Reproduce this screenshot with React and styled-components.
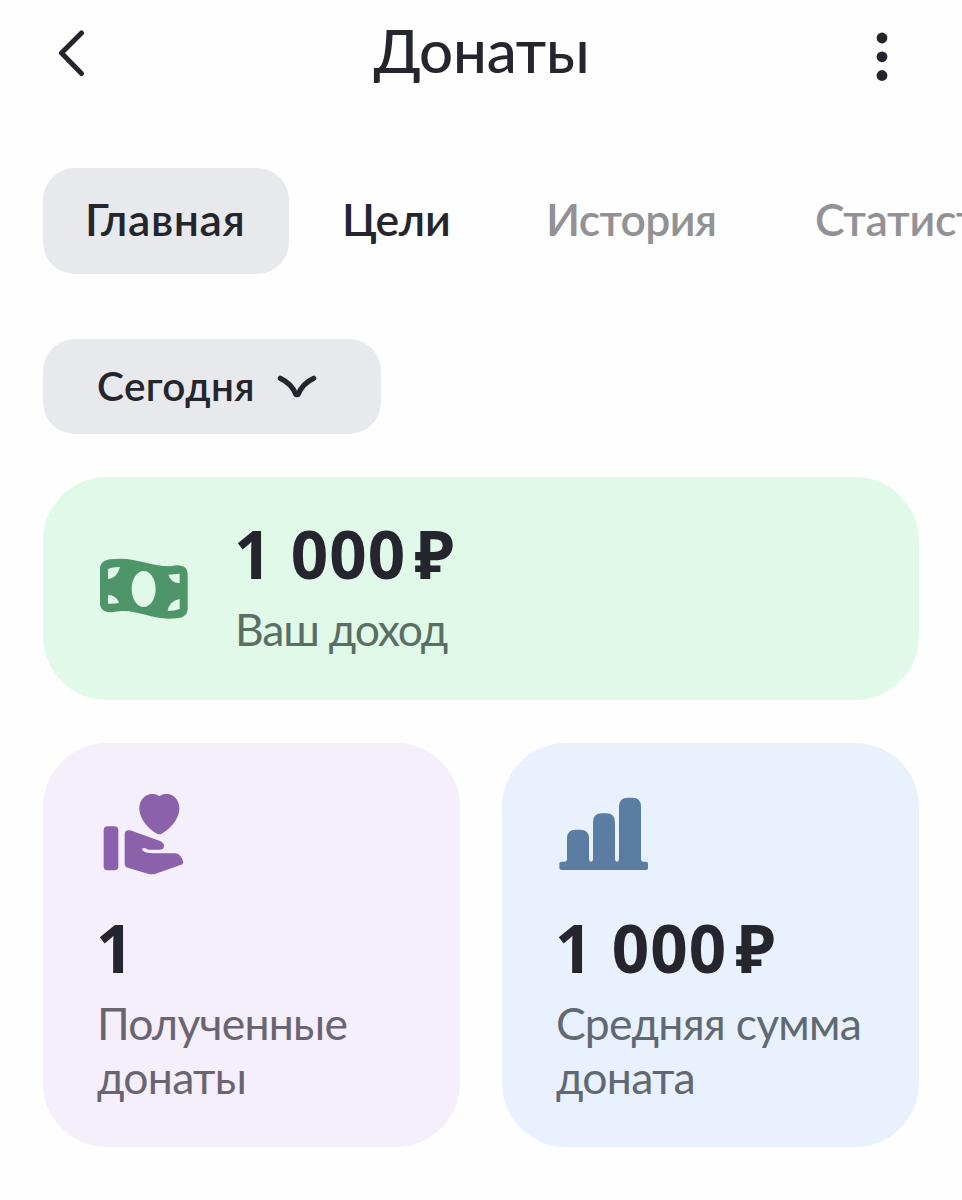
import React from 'react';
import styled, { createGlobalStyle } from 'styled-components';

const palette = {
  text: '#24252d',
  textMuted: '#929296',
  gray: '#e8e9ed',
  green: '#e1f9e9',
  greenIcon: '#4e9569',
  greenText: '#5b6e64',
  purple: '#f5eefb',
  purpleIcon: '#8b61ab',
  purpleText: '#6a6470',
  blue: '#e9f1fc',
  blueIcon: '#5b7ca3',
  blueText: '#606973',
};

const GlobalStyle = createGlobalStyle`
  * {
    box-sizing: border-box;
  }
  body {
    margin: 0;
    background: #fefefe;
    color: ${palette.text};
    font-family: Lato, 'Noto Sans', sans-serif;
  }
  button {
    padding: 0;
    border: 0;
    background: none;
    color: inherit;
    font-family: inherit;
    cursor: pointer;
  }
  svg {
    display: block;
  }
`;

const Page = styled.div`
  width: 100%;
  min-height: 1200px;
  overflow: hidden;
`;

const Header = styled.header`
  display: grid;
  grid-template-columns: 86px 1fr 86px;
  align-items: start;
  height: 168px;
  padding: 14px 37px 0 43px;
`;

const Title = styled.h1`
  margin: 0;
  padding-right: 5px;
  font-size: 60px;
  font-weight: 500;
  line-height: 72px;
  letter-spacing: -0.2px;
  text-align: center;
`;

const IconButton = styled.button`
  display: flex;
  justify-content: ${props => props.$align};
  padding: ${props => props.$pad};
`;

const Tabs = styled.nav`
  display: flex;
  height: 106px;
  padding-left: 43px;
`;

const Tab = styled.button`
  flex: 0 0 auto;
  width: ${props => props.$width}px;
  height: 106px;
  padding: 0 0 6px ${props => props.$indent}px;
  border-radius: 32px;
  background: ${props => (props.$active ? palette.gray : 'transparent')};
  color: ${props => (props.$muted ? palette.textMuted : palette.text)};
  font-size: 44.5px;
  font-weight: 600;
  letter-spacing: ${props => props.$spacing}px;
  text-align: left;
  white-space: nowrap;
`;

const Main = styled.main`
  display: flex;
  flex-direction: column;
  align-items: flex-start;
  padding: 65px 43px 0;
`;

const Period = styled.button`
  display: flex;
  align-items: center;
  gap: 22px;
  width: 338px;
  height: 95px;
  margin-bottom: 43px;
  padding: 0 0 0 54px;
  border-radius: 32px;
  background: ${palette.gray};
  font-size: 40.5px;
  font-weight: 600;
  letter-spacing: 0.4px;
  span {
    padding-bottom: 2px;
  }
`;

const Card = styled.section`
  border-radius: 64px;
  background: ${props => palette[props.$tone]};
  svg {
    fill: ${props => palette[`${props.$tone}Icon`]};
  }
  p {
    color: ${props => palette[`${props.$tone}Text`]};
  }
`;

const IncomeCard = styled(Card)`
  display: flex;
  align-items: center;
  gap: 46px;
  width: 876px;
  height: 223px;
  padding-left: 57px;
`;

const Income = styled.div`
  padding-bottom: 3px;
`;

const CardGrid = styled.div`
  display: grid;
  grid-template-columns: 417px 417px;
  gap: 42px;
  margin-top: 43px;
`;

const StatCard = styled(Card)`
  height: 404px;
  padding: 50px 0 0 53px;
`;

const IconBox = styled.div`
  height: 119px;
  padding: ${props => props.$pad};
`;

const Amount = styled.div`
  display: flex;
  font-family: 'Noto Sans', sans-serif;
  font-size: 65.5px;
  font-weight: 700;
  line-height: 72px;
  letter-spacing: 1.1px;
  white-space: pre;
`;

const Currency = styled.span`
  margin-left: 8px;
`;

const Label = styled.p`
  margin: 12px 0 0;
  padding-left: 1px;
  font-size: 44.5px;
  line-height: 53.5px;
  letter-spacing: ${props => props.$spacing || -0.75}px;
`;

const BackIcon = () => (
  <svg width="28" height="48" viewBox="0 0 28 48" fill="none">
    <path
      d="M24.5 4 4.5 24l20 20.5"
      stroke={palette.text}
      strokeWidth="5"
      strokeLinecap="round"
      strokeLinejoin="round"
    />
  </svg>
);

const MoreIcon = () => (
  <svg width="12" height="50" viewBox="0 0 12 50" fill={palette.text}>
    <circle cx="6" cy="6" r="5.4" />
    <circle cx="6" cy="24.8" r="5.4" />
    <circle cx="6" cy="43.5" r="5.4" />
  </svg>
);

const ChevronIcon = () => (
  <svg width="40" height="24" viewBox="0 0 120 72" fill="none">
    <path
      d="M10 10C32 20 49 38 57 59h6C71 38 88 20 110 10"
      stroke={palette.text}
      strokeWidth="16"
      strokeLinecap="round"
      strokeLinejoin="round"
    />
  </svg>
);

const MoneyIcon = () => (
  <svg width="88" height="62" viewBox="60 54 264 186">
    <path
      fillRule="evenodd"
      d="M60 89C60 68 73 60 92 58C167 49 208 80 272 79C306 70 323 82 323 103V205C323 226 310 233 290 235C216 244 175 205 105 215C77 221 60 211 60 190ZM84 87V117Q112 114 120 81Q95 81 84 87ZM299 101V130Q271 127 265 104Q285 103 299 101ZM84 165V191Q99 192 117 189Q110 166 84 165ZM299 177V207Q285 213 263 213Q267 183 299 177ZM191 93C171 93 155 117 155 147S171 201 191 201S227 177 227 147S211 93 191 93Z"
    />
  </svg>
);

const DonateIcon = () => (
  <svg width="81" height="82" viewBox="70 38 243 246">
    <rect x="72" y="138" width="44" height="132" rx="12" />
    <path d="M239 48C248 41 256 41 264 41C286 43 299 62 299 84C299 119 267 149 246 160Q239 163 232 160C211 149 179 119 179 84C179 62 193 43 214 41C223 41 231 41 239 48Z" />
    <path d="M135 161Q136 148 150 150Q158 152 168 156L239 181Q253 187 253 197Q253 208 239 208H206Q194 200 187 205Q186 210 196 215Q206 219 220 219H287Q305 221 311 247Q309 252 302 254L228 280Q217 284 205 280L147 263Q135 260 135 250Z" />
  </svg>
);

const ChartIcon = () => (
  <svg width="90" height="74" viewBox="56 50 270 222">
    <path d="M57 250Q57 244 64 244H74Q80 244 80 236V174Q80 148 106 148H120Q146 148 146 174V236Q146 244 152 244T158 236V126Q158 99 184 99H198Q224 99 224 126V236Q224 244 230 244T236 236V79Q236 52 262 52H276Q302 52 302 79V236Q302 244 308 244H317Q323 244 323 250V263Q323 269 317 269H64Q57 269 57 263Z" />
  </svg>
);

const tabs = [
  { title: 'Главная', width: 246, indent: 42, spacing: 0.6, active: true },
  { title: 'Цели', width: 204, indent: 53, spacing: -0.3 },
  { title: 'История', width: 269, indent: 53, spacing: -0.7, muted: true },
  { title: 'Статистика', width: 330, indent: 53, spacing: -0.3, muted: true },
];

const App = () => {
  return (
    <Page>
      <GlobalStyle />
      <Header>
        <IconButton $align="flex-start" $pad="15px 0 0 14px" aria-label="Назад">
          <BackIcon />
        </IconButton>
        <Title>Донаты</Title>
        <IconButton $align="flex-end" $pad="18px 37px 0 0" aria-label="Меню">
          <MoreIcon />
        </IconButton>
      </Header>
      <Tabs>
        {tabs.map(tab => (
          <Tab
            key={tab.title}
            $width={tab.width}
            $indent={tab.indent}
            $spacing={tab.spacing}
            $active={tab.active}
            $muted={tab.muted}
          >
            {tab.title}
          </Tab>
        ))}
      </Tabs>
      <Main>
        <Period>
          <span>Сегодня</span>
          <ChevronIcon />
        </Period>
        <IncomeCard $tone="green">
          <MoneyIcon />
          <Income>
            <Amount>
              1 000<Currency>₽</Currency>
            </Amount>
            <Label $spacing={-1.2}>Ваш доход</Label>
          </Income>
        </IncomeCard>
        <CardGrid>
          <StatCard $tone="purple">
            <IconBox $pad="0 0 0 7px">
              <DonateIcon />
            </IconBox>
            <Amount>1</Amount>
            <Label>
              Полученные
              <br />
              донаты
            </Label>
          </StatCard>
          <StatCard $tone="blue">
            <IconBox $pad="4px 0 0 4px">
              <ChartIcon />
            </IconBox>
            <Amount>
              1 000<Currency>₽</Currency>
            </Amount>
            <Label>
              Средняя сумма
              <br />
              доната
            </Label>
          </StatCard>
        </CardGrid>
      </Main>
    </Page>
  );
};

export default App;
